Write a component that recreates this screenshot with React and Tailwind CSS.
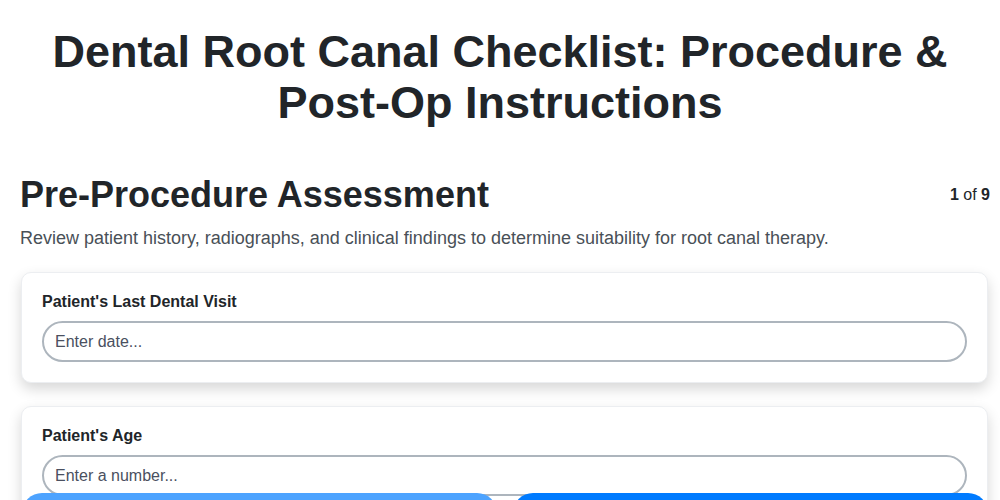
import { useState } from "react";

const fields = [
  { label: "Patient's Last Dental Visit", placeholder: "Enter date...", type: "text" },
  { label: "Patient's Age", placeholder: "Enter a number...", type: "number" },
  { label: "Known Allergies", placeholder: "Enter text...", type: "text" },
];

export default function App() {
  const [values, setValues] = useState({});

  return (
    <div className="h-screen overflow-hidden bg-white pt-[26px] font-['Liberation_Sans',Arial,sans-serif] text-[#212529]">
      <h1 className="px-[20px] text-center text-[45px] leading-[51px] font-bold">
        Dental Root Canal Checklist: Procedure &amp; <span className="whitespace-nowrap">Post-Op</span> Instructions
      </h1>

      <div className="pl-[20px] pr-[10px]">
        {/* Step header */}
        <div className="mt-[45px] flex items-center justify-between">
          <h2 className="text-[36px] leading-[43px] font-bold">Pre-Procedure Assessment</h2>
          <span className="text-[16px] text-[#212529]">
            <b>1</b> of <b>9</b>
          </span>
        </div>
        <p className="mt-[9px] text-[18px] leading-[26px] text-[#495057]">
          Review patient history, radiographs, and clinical findings to determine suitability for root canal therapy.
        </p>

        {/* Fields */}
        <div className="mt-[21px] flex flex-col gap-[23px] pl-[1px] pr-[2px]">
          {fields.map((f) => (
            <div
              key={f.label}
              className="rounded-[10px] border border-[#eceef1] bg-white px-[20px] pt-[19px] pb-[20px] shadow-[0_6px_14px_rgba(0,0,0,0.16)]"
            >
              <label className="block text-[16px] leading-[20px] font-bold text-[#212529]">{f.label}</label>
              <input
                type={f.type}
                placeholder={f.placeholder}
                value={values[f.label] || ""}
                onChange={(e) => setValues({ ...values, [f.label]: e.target.value })}
                className="mt-[9px] block h-[41px] w-full rounded-full border-2 border-[#adb5bd] bg-white px-[11px] text-[16px] text-[#212529] outline-none placeholder:text-[#4a5060]"
              />
            </div>
          ))}
        </div>
      </div>

      {/* Navigation */}
      <div className="fixed top-[493px] left-[22px] right-[12px] flex gap-[16px]">
        <button className="h-[48px] flex-1 rounded-[20px] bg-[#4da3ff] pt-[24px] text-[16px] font-bold text-white">
          Previous
        </button>
        <button className="h-[48px] flex-1 rounded-[20px] bg-[#007bff] pt-[24px] text-[16px] font-bold text-white">
          Next
        </button>
      </div>
    </div>
  );
}
